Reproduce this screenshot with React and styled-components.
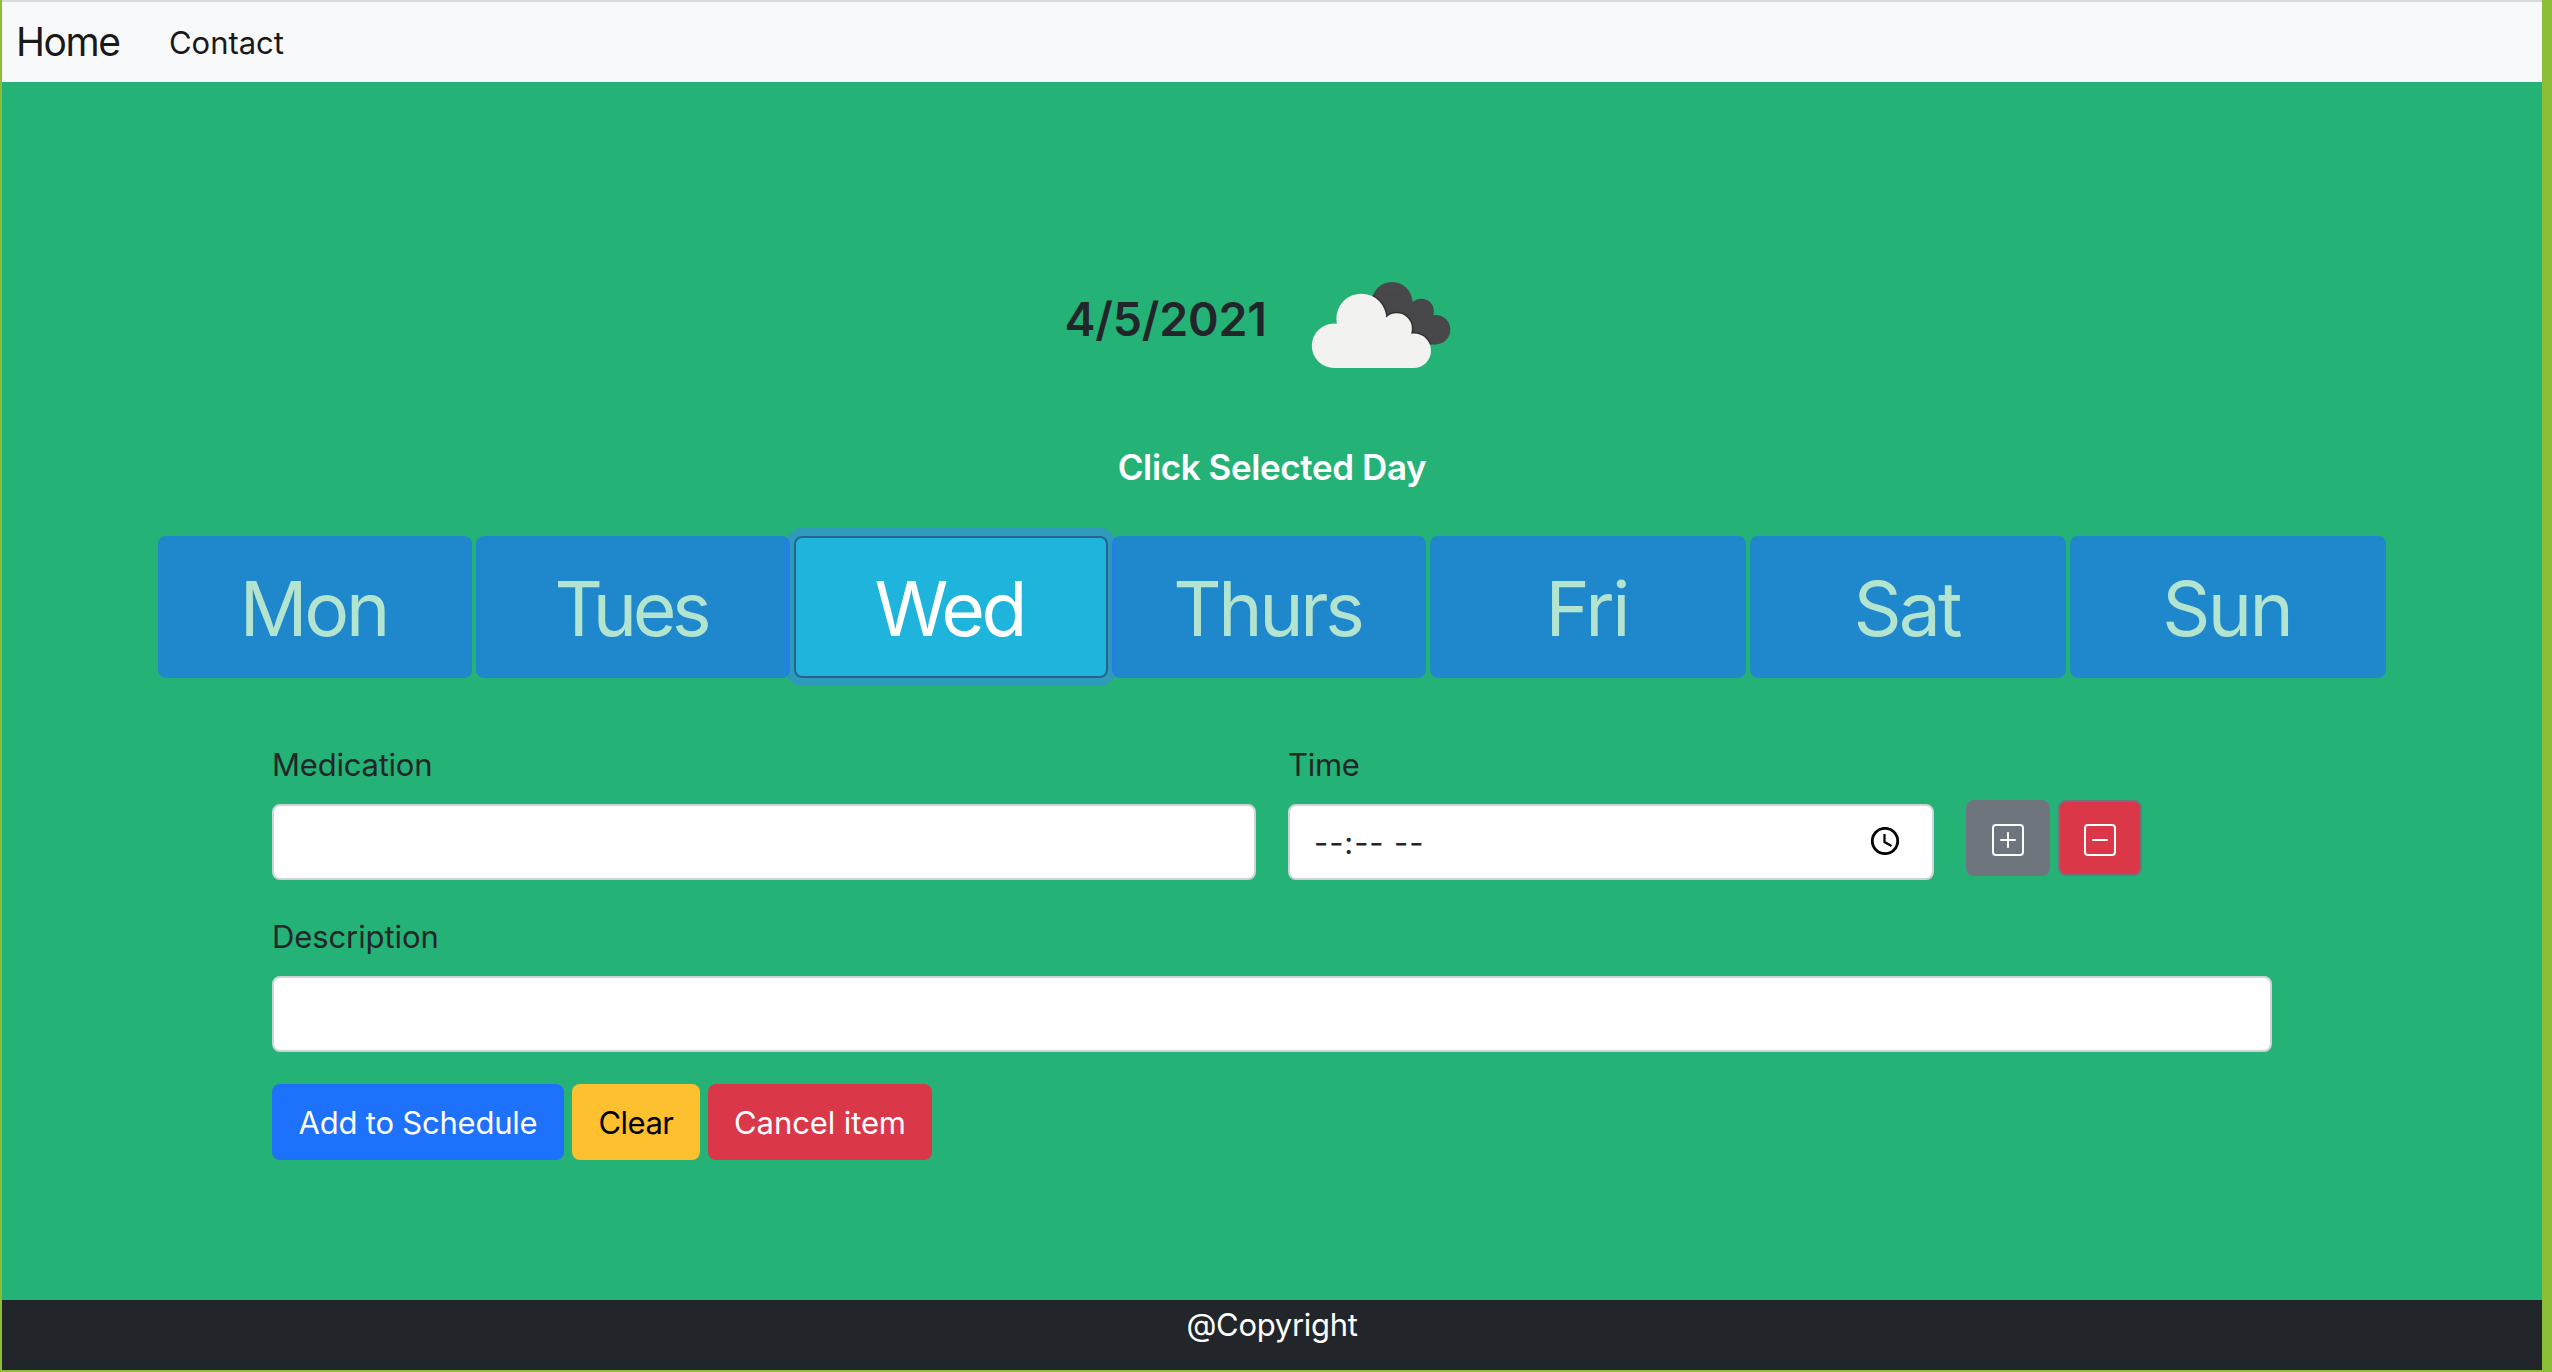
import React, { useState } from "react";
import styled, { createGlobalStyle } from "styled-components";
import { BsPlusSquare, BsDashSquare } from "react-icons/bs";

const GlobalStyle = createGlobalStyle`
  *, *::before, *::after { box-sizing: border-box; }
  body {
    margin: 0;
    background: #8cbd36;
    color: #222529;
    font-family: Inter, "Liberation Sans", sans-serif;
    font-size: 31px;
    line-height: 48px;
  }
`;

const Page = styled.div`
  display: flex;
  flex-direction: column;
  height: 1372px;
  border: solid #8cbd36;
  border-width: 0 10px 2px 2px;
`;

const Navbar = styled.nav`
  display: flex;
  align-items: center;
  flex: none;
  height: 82px;
  padding-left: 14px;
  border-top: 2px solid #d9dadb;
  background: #f8f9fb;
  color: #19191a;
`;

const Brand = styled.a`
  width: 153px;
  font-size: 39px;
  letter-spacing: -1.4px;
`;

const NavLink = styled.a`
  padding-top: 2px;
  letter-spacing: -0.05px;
`;

const Main = styled.main`
  display: flex;
  flex-direction: column;
  flex: 1;
  padding-top: 143px;
  background: #25b276;
`;

const Today = styled.header`
  display: flex;
  align-items: center;
  justify-content: center;
  height: 200px;
`;

const DateText = styled.h2`
  width: 217px;
  margin: 0 0 12px;
  padding-left: 1px;
  font-size: 46.5px;
  font-weight: 600;
  letter-spacing: -0.2px;
  white-space: nowrap;
`;

const Prompt = styled.h3`
  margin: 20px 0 47px;
  color: #fff;
  font-size: 35px;
  font-weight: 600;
  line-height: 44px;
  letter-spacing: -0.4px;
  text-align: center;
`;

const Days = styled.div`
  display: grid;
  grid-template-columns: repeat(4, 314px) repeat(3, 316px);
  gap: 4px;
  margin: 0 156px 62px;
`;

const DayButton = styled.button`
  position: relative;
  z-index: ${(p) => (p.$active ? 0 : 1)};
  height: 142px;
  padding: 4px 0 0;
  border: 2px solid ${(p) => (p.$active ? "#2a628f" : "#1d71fa")};
  border-radius: 8px;
  background: ${(p) => (p.$active ? "#1fb4db" : "#1d71fa")};
  box-shadow: ${(p) => (p.$active ? "0 0 0 8px rgba(55, 132, 253, 0.5)" : "none")};
  opacity: ${(p) => (p.$active ? 1 : 0.65)};
  color: #fff;
  font-family: inherit;
  font-size: 75px;
  line-height: 112px;
`;

const DayName = styled.span`
  display: inline-block;
  margin-right: ${(p) => p.$tight}px;
  letter-spacing: -${(p) => p.$tight}px;
`;

const Form = styled.form`
  display: flex;
  flex-direction: column;
  gap: 32px;
  margin: 0 270px;
`;

const Row = styled.div`
  display: grid;
  grid-template-columns: 984px 646px auto;
  column-gap: 32px;
  justify-content: start;
`;

const Field = styled.div`
  display: flex;
  flex-direction: column;
  gap: 16px;
`;

const Label = styled.label`
  height: 48px;
  padding-top: 1px;
  letter-spacing: ${(p) => p.$spacing || 0}px;
`;

const Input = styled.input`
  width: 100%;
  height: 76px;
  padding: 12px 24px;
  border: 2px solid #cfd4da;
  border-radius: 8px;
  background: #fff;
  color: inherit;
  font: inherit;
`;

const TimeBox = styled.div`
  display: flex;
  align-items: center;
  justify-content: space-between;
  height: 76px;
  padding: 0 32px 0 24px;
  border: 2px solid #cfd4da;
  border-radius: 8px;
  background: #fff;
  letter-spacing: 0.9px;
`;

const TimeValue = styled.span`
  padding-top: 2px;
`;

const Buttons = styled.div`
  display: flex;
  gap: 8px;
`;

const RowButtons = styled(Buttons)`
  padding-top: 60px;
`;

const IconButton = styled.button`
  display: flex;
  align-items: center;
  justify-content: center;
  width: 84px;
  height: 76px;
  padding: 4px 0 0;
  border: 2px solid #6e757d;
  border-radius: 8px;
  background: ${(p) => p.$bg};
  color: #fff;
`;

const Button = styled.button`
  width: ${(p) => p.$width}px;
  height: 76px;
  padding: 2px 0 0;
  border: 0;
  border-radius: 8px;
  background: ${(p) => p.$bg};
  color: ${(p) => p.$color || "#fff"};
  font: inherit;
  letter-spacing: ${(p) => p.$spacing}px;
  white-space: nowrap;
`;

const Footer = styled.footer`
  flex: none;
  height: 70px;
  padding-top: 1px;
  background: #222529;
  color: #fff;
  letter-spacing: -0.3px;
  text-align: center;
`;

function CloudsIcon() {
  return (
    <svg width="200" height="200" viewBox="1281 225 200 200" aria-hidden="true">
      <defs>
        <clipPath id="overlap">
          <circle cx="1392" cy="302.5" r="20.5" />
          <circle cx="1421.3" cy="311.2" r="12.5" />
          <circle cx="1435.6" cy="329.7" r="14.7" />
          <path d="M1392 302 1412 303 1421 311 1433 315 1436 330V344.4H1405Z" />
        </clipPath>
      </defs>
      <g fill="#48484a">
        <circle cx="1392" cy="302.5" r="20.5" />
        <circle cx="1421.3" cy="311.2" r="12.5" />
        <circle cx="1435.6" cy="329.7" r="14.7" />
        <path d="M1392 302 1412 303 1421 311 1433 315 1436 330V344.4H1405Z" />
      </g>
      <g fill="none" stroke="#2c2c2e" strokeWidth="3" opacity=".8" clipPath="url(#overlap)">
        <circle cx="1361.3" cy="318.7" r="25" />
        <circle cx="1396.7" cy="328.5" r="15.2" />
        <circle cx="1413.7" cy="350.7" r="17.3" />
      </g>
      <g fill="#f2f2f0">
        <circle cx="1334" cy="345.8" r="22.2" />
        <circle cx="1361.3" cy="318.7" r="25" />
        <circle cx="1396.7" cy="328.5" r="15.2" />
        <circle cx="1413.7" cy="350.7" r="17.3" />
        <path d="M1334 368V330L1345 320H1395L1414 340V368Z" />
      </g>
    </svg>
  );
}

function ClockIcon() {
  return (
    <svg width="30" height="30" viewBox="0 0 30 30" fill="none" stroke="#000" aria-hidden="true">
      <circle cx="15" cy="14" r="12.7" strokeWidth="2.8" />
      <path d="M14.5 7V15L21.5 19" strokeWidth="2.2" />
    </svg>
  );
}

const DAYS = [
  { name: "Mon", tight: 3.3 },
  { name: "Tues", tight: 4.5 },
  { name: "Wed", tight: 3.4 },
  { name: "Thurs", tight: 3.3 },
  { name: "Fri", tight: 2.4 },
  { name: "Sat", tight: 2.8 },
  { name: "Sun", tight: 2.7 },
];

export default function App() {
  const [selected, setSelected] = useState("Wed");
  return (
    <>
      <GlobalStyle />
      <Page>
        <Navbar>
          <Brand>Home</Brand>
          <NavLink>Contact</NavLink>
        </Navbar>
        <Main>
          <Today>
            <DateText>4/5/2021</DateText>
            <CloudsIcon />
          </Today>
          <Prompt>Click Selected Day</Prompt>
          <Days>
            {DAYS.map((day) => (
              <DayButton key={day.name} $active={day.name === selected} onClick={() => setSelected(day.name)}>
                <DayName $tight={day.tight}>{day.name}</DayName>
              </DayButton>
            ))}
          </Days>
          <Form onSubmit={(e) => e.preventDefault()}>
            <Row>
              <Field>
                <Label htmlFor="medication" $spacing={-0.22}>Medication</Label>
                <Input id="medication" />
              </Field>
              <Field>
                <Label $spacing={-0.3}>Time</Label>
                <TimeBox>
                  <TimeValue>--:-- --</TimeValue>
                  <ClockIcon />
                </TimeBox>
              </Field>
              <RowButtons>
                <IconButton type="button" $bg="#6e757d"><BsPlusSquare size={32} /></IconButton>
                <IconButton type="button" $bg="#da3748"><BsDashSquare size={32} /></IconButton>
              </RowButtons>
            </Row>
            <Field>
              <Label htmlFor="description" $spacing={-0.1}>Description</Label>
              <Input id="description" />
            </Field>
            <Buttons>
              <Button $bg="#1d71fa" $width={292} $spacing={-0.22}>Add to Schedule</Button>
              <Button type="button" $bg="#fdc02f" $color="#000" $width={128} $spacing={-0.5}>Clear</Button>
              <Button type="button" $bg="#da3748" $width={224} $spacing={-0.1}>Cancel item</Button>
            </Buttons>
          </Form>
        </Main>
        <Footer>@Copyright</Footer>
      </Page>
    </>
  );
}
